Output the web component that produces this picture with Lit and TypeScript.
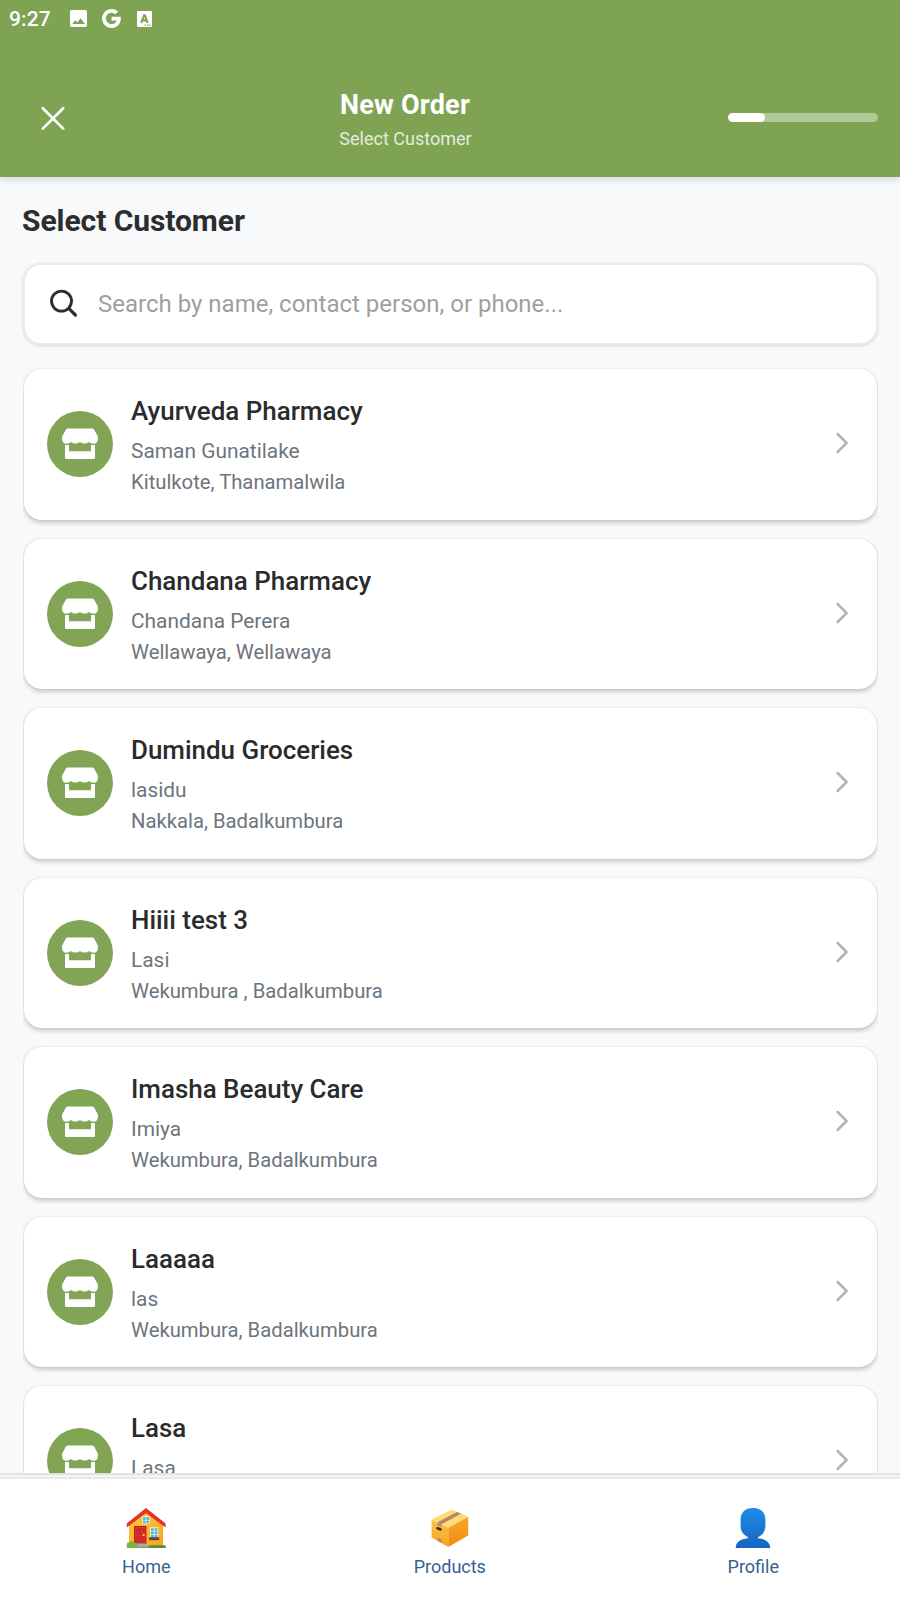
import { LitElement, html, css, svg } from "lit";
import { customElement, property } from "lit/decorators.js";

interface Customer {
  name: string;
  contact: string;
  address: string;
}

const CUSTOMERS: Customer[] = [
  { name: "Ayurveda Pharmacy", contact: "Saman Gunatilake", address: "Kitulkote, Thanamalwila" },
  { name: "Chandana Pharmacy", contact: "Chandana Perera", address: "Wellawaya, Wellawaya" },
  { name: "Dumindu Groceries", contact: "lasidu", address: "Nakkala, Badalkumbura" },
  { name: "Hiiii test 3", contact: "Lasi", address: "Wekumbura , Badalkumbura" },
  { name: "Imasha Beauty Care", contact: "Imiya", address: "Wekumbura, Badalkumbura" },
  { name: "Laaaaa", contact: "las", address: "Wekumbura, Badalkumbura" },
  { name: "Lasa", contact: "Lasa", address: "Wekumbura, Badalkumbura" },
];

@customElement("status-bar")
class StatusBar extends LitElement {
  static styles = css`
    :host { display: flex; align-items: center; height: 37px; padding-left: 9px; color: #fff; }
    .time { font-size: 21px; font-weight: 500; line-height: 25px; width: 61px; padding-top: 1.5px; letter-spacing: 0.15px; }
    svg { display: block; fill: #fff; }
    .photo { margin-right: 14.5px; }
    .google { margin-right: 16px; }
    .hole { fill: #7ea453; }
    .letter { fill: none; stroke: #7ea453; stroke-width: 2.1; }
  `;
  render() {
    return html`
      <span class="time">9:27</span>
      <svg class="photo" width="17" height="17" viewBox="0 0 17 17">
        <rect width="17" height="17" rx="1.8" />
        <path class="hole" d="M2.3 14 L5.2 10.2 L7.3 12.5 L10.7 8.2 L15 14 Z" />
      </svg>
      <svg class="google" width="19" height="19" viewBox="0 0 19 19">
        <path d="M9.6 7.8 H18.7 C19.6 14 15.8 19 9.7 19 A9.5 9.5 0 1 1 16.1 2.6 L13.4 5.3 A5.7 5.7 0 1 0 14.9 11.4 H9.6 Z" />
      </svg>
      <svg width="15" height="16" viewBox="0 0 15 16">
        <rect width="15" height="16" rx="1.2" />
        <path class="letter" d="M4.2 12 L7.1 4.2 H7.9 L10.6 12 M5.3 9.4 H9.6" />
        <path class="hole" d="M7.6 13.4h1.4v1.3h-1.4z M10 13.4h1.4v1.3h-1.4z M12.3 13.4h1.4v1.3h-1.4z" />
      </svg>
    `;
  }
}

@customElement("order-header")
class OrderHeader extends LitElement {
  @property({ type: Number }) progress = 24.6;
  static styles = css`
    :host { display: flex; align-items: center; justify-content: space-between; box-sizing: border-box;
      height: 140px; padding: 22px 22px 0 23px; color: #fff; }
    .close { width: 60px; height: 60px; display: grid; place-items: center; }
    .close svg { display: block; fill: none; stroke: #fff; stroke-width: 2.7; stroke-linecap: round; }
    .titles { text-align: center; padding-top: 3px; }
    .title { font-size: 27px; line-height: 32px; font-weight: 700; letter-spacing: 0.22px; padding-right: 1px; }
    .step { margin-top: 7px; font-size: 18px; line-height: 22px; opacity: 0.8; }
    .track { width: 150px; height: 9px; margin-bottom: 1px; border-radius: 4.5px; background: rgba(255, 255, 255, 0.4); overflow: hidden; }
    .bar { height: 9px; border-radius: 4.5px; background: #fff; }
  `;
  render() {
    return html`
      <div class="close">
        <svg width="26" height="26" viewBox="0 0 26 26"><path d="M2.8 3.2 L23.2 23.6 M23.2 3.2 L2.8 23.6" /></svg>
      </div>
      <div class="titles">
        <div class="title">New Order</div>
        <div class="step">Select Customer</div>
      </div>
      <div class="track"><div class="bar" style="width:${this.progress}%"></div></div>
    `;
  }
}

@customElement("search-field")
class SearchField extends LitElement {
  static styles = css`
    :host { display: flex; align-items: center; box-sizing: border-box; height: 82px; margin: 0 22px 0 23px;
      padding-left: 24.5px; background: #fff; border: 2px solid #e9ebed; border-radius: 18px;
      box-shadow: 0 1px 3px rgba(0, 0, 0, 0.13); }
    svg { display: block; fill: none; stroke: #2b2d2e; stroke-width: 2.9; stroke-linecap: round; margin-right: 18.5px; }
    span { font-size: 24px; line-height: 30px; color: #9f9f9f; }
  `;
  render() {
    return html`
      <svg width="30" height="30" viewBox="0 0 30 30">
        <circle cx="11.5" cy="12.1" r="10" /><path stroke-width="3.2" d="M19 19.6 L25.4 26" />
      </svg>
      <span>Search by name, contact person, or phone...</span>
    `;
  }
}

@customElement("customer-card")
class CustomerCard extends LitElement {
  @property({ attribute: false }) customer!: Customer;
  static styles = css`
    :host { display: flex; align-items: center; box-sizing: border-box; flex: none; height: 150.5px;
      padding: 0 27px 0.5px 23px; background: #fff; border-radius: 18px;
      box-shadow: 0 0 1.5px rgba(0, 0, 0, 0.12), 0 2.5px 4px rgba(0, 0, 0, 0.19); }
    .badge { display: block; flex: none; margin-right: 18px; }
    .disc { fill: #81a555; }
    .shop { fill: #fff; }
    .text { flex: 1; padding-top: 3.5px; }
    .name { font-size: 25.95px; line-height: 30px; font-weight: 500; color: #2a2b2c; }
    .contact { margin-top: 12px; font-size: 20.9px; line-height: 27px; color: #6c757d; }
    .address { margin-top: 4px; font-size: 20.25px; line-height: 26px; color: #6c757d; }
    .chevron { display: block; margin-bottom: 1.5px; fill: none; stroke: #adb5bd; stroke-width: 2.5; stroke-linecap: round; stroke-linejoin: round; }
  `;
  render() {
    const c = this.customer;
    return html`
      <svg class="badge" width="66" height="66" viewBox="0 0 66 66">
        <circle class="disc" cx="33" cy="33" r="33" />
        <path class="shop" d="M21 17.4 H45 Q46.4 17.4 47.1 18.6 L50.6 25 Q51 25.8 51 27
          Q51 32.8 46.6 32.8 Q43.6 32.8 42 31 Q40.3 32.6 37.5 32.6 Q34.7 32.6 33 31
          Q31.3 32.6 28.5 32.6 Q25.7 32.6 24 31 Q22.4 32.8 19.4 32.8 Q15 32.8 15 27
          Q15 25.8 15.4 25 L18.9 18.6 Q19.6 17.4 21 17.4 Z" />
        <path class="shop" d="M18 34.1 H22 V40.3 H44 V34.1 H48 V46.9 Q48 48 46.9 48 H19.1 Q18 48 18 46.9 Z" />
      </svg>
      <div class="text">
        <div class="name">${c.name}</div>
        <div class="contact">${c.contact}</div>
        <div class="address">${c.address}</div>
      </div>
      <svg class="chevron" width="16" height="22" viewBox="0 0 16 22"><path d="M3.6 2 L12.6 11 L3.6 20" /></svg>
    `;
  }
}

const HOUSE = svg`
  <defs><linearGradient id="wall" x1="0" y1="0" x2="1" y2="1">
    <stop offset="0" stop-color="#fcc93a" /><stop offset="1" stop-color="#f9a61e" /></linearGradient></defs>
  <path fill="url(#wall)" d="M20 3 L37 17 V38 H3 V17 Z" />
  <path fill="#e4302b" d="M20 0 L39.6 15.6 V19.6 L20 5 L.8 19.6 V15.6 Z" />
  <rect x="16.2" y="8.2" width="7.6" height="8" fill="#fff3c8" />
  <path fill="#55b7e6" d="M17 9h2.7v2.9H17z M20.4 9h2.7v2.9h-2.7z M17 12.6h2.7v2.9H17z M20.4 12.6h2.7v2.9h-2.7z" />
  <rect x="8" y="18" width="12.4" height="18" fill="#b71c1c" />
  <rect x="9" y="19" width="10.4" height="17" fill="#df2f2f" />
  <path fill="none" stroke="#bd2020" stroke-width=".7" d="M10.8 21h2.8v5.4h-2.8z M15 21h2.8v5.4H15z M10.8 28.4h2.8v5.4h-2.8z M15 28.4h2.8v5.4H15z" />
  <circle cx="17.6" cy="27" r="1.2" fill="#fbc02d" />
  <rect x="24" y="19.3" width="8.4" height="10.6" fill="#fff3c8" />
  <path fill="#45b3e8" d="M25 20.2h2.8v2.6H25z M28.7 20.2h2.8v2.6h-2.8z M25 23.6h2.8v2.6H25z M28.7 23.6h2.8v2.6h-2.8z M25 27h2.8v2.6H25z M28.7 27h2.8v2.6h-2.8z" />
  <rect x="23.2" y="29.2" width="10" height="3" fill="#6b4034" />
  <rect x="4" y="37.2" width="35.6" height="2.8" fill="#5d8f2c" />
  <path fill="#a8a8a8" d="M8 38 V35.4 H20.5 V37 H22.6 V39.4 H8 Z" />
  <path fill="#7cb342" d="M.8 40 V36.4 Q1 34 3.4 34.4 Q5 32 7.4 33.4 Q9.8 34 9.8 35.8 Q12.6 36 12.4 40 Z" />`;

const BOX = svg`
  <defs>
    <linearGradient id="lf" x1="0" y1="0" x2="0" y2="1"><stop offset="0" stop-color="#fbc345" /><stop offset="1" stop-color="#f7a325" /></linearGradient>
    <linearGradient id="rt" x1="0" y1="0" x2="0" y2="1"><stop offset="0" stop-color="#fba729" /><stop offset="1" stop-color="#ee8e0f" /></linearGradient>
  </defs>
  <path fill="url(#lf)" d="M1.6 11.4 L18.3 19.6 V39 L1.6 29.6 Z" />
  <path fill="url(#rt)" d="M18.3 19.6 L38.2 8.4 V27.6 L18.3 39 Z" />
  <path fill="#fddc79" d="M1.6 11.4 L21.6 1.6 L38.2 8.4 L18.3 19.6 Z" />
  <path fill="#bd8368" d="M7.6 14.3 L26.9 4 L31.1 5.7 L11.5 16.2 Z" />
  <path fill="#b9895b" d="M7.6 14.3 L11.5 16.2 V18.9 L7.6 17.4 Z M7.6 29.6 L11.5 31.4 V35 L7.6 33 Z" />
  <path stroke="#3d2a25" stroke-width="2.6" stroke-linecap="round" d="M7.5 20.3 L10.6 21.4" />`;

const PERSON = svg`
  <defs><linearGradient id="bust" x1="0" y1="0" x2="0" y2="40" gradientUnits="userSpaceOnUse">
    <stop offset=".1" stop-color="#1e88e5" /><stop offset="1" stop-color="#1565c0" /></linearGradient></defs>
  <path fill="url(#bust)" d="M20 0 C28 0 32.4 4.6 32.4 12 V17.5 C32.4 23.8 29 27.2 25.2 29 Q24.6 30 25.6 30.3
    C32.4 31 37.2 34.2 37.3 40 H2.7 C2.8 34.2 7.6 31 14.4 30.3 Q15.4 30 14.8 29 C11 27.2 7.6 23.8 7.6 17.5 V12 C7.6 4.6 12 0 20 0 Z" />`;

@customElement("tab-bar")
class TabBar extends LitElement {
  static styles = css`
    :host { display: grid; grid-template-columns: repeat(3, 303.5px); justify-content: center; flex: none;
      box-sizing: border-box; height: 127px; padding: 29px 0.4px 0 0; background: #fff;
      border-top: 6px solid; border-image: linear-gradient(#e0e3e6 0 2px, #f3f5f7 2px 4px, #e6eaed 4px 6px) 6 0 0 0; }
    .tab { display: flex; flex-direction: column; align-items: center; }
    .tab svg { display: block; }
    .label { margin-top: 8px; font-size: 18px; line-height: 22px; color: #356291; }
  `;
  render() {
    return html`${[["Home", HOUSE] as const, ["Products", BOX] as const, ["Profile", PERSON] as const].map(
      ([label, art]) => html`<div class="tab">
        <svg width="40" height="40" viewBox="0 0 40 40">${art}</svg>
        <span class="label">${label}</span>
      </div>`
    )}`;
  }
}

@customElement("app-root")
class AppRoot extends LitElement {
  static styles = css`
    :host { display: flex; flex-direction: column; height: 1600px; overflow: hidden; background: #f8f9fb;
      font-family: Roboto, sans-serif; }
    .top { flex: none; background: #7ea453; box-shadow: 0 2px 8px rgba(0, 0, 0, 0.16); }
    .heading { margin: 26px 22px 24px; font-size: 30px; line-height: 36px; font-weight: 700; letter-spacing: -0.06px; color: #2c2d2e; }
    search-field { flex: none; }
    .list { flex: 1; min-height: 0; overflow: hidden; display: flex; flex-direction: column; gap: 19px;
      margin: 22px 22px 0 23px; padding: 2px 1px 0; }
  `;
  render() {
    return html`
      <div class="top">
        <status-bar></status-bar>
        <order-header></order-header>
      </div>
      <div class="heading">Select Customer</div>
      <search-field></search-field>
      <div class="list">${CUSTOMERS.map((c) => html`<customer-card .customer=${c}></customer-card>`)}</div>
      <tab-bar></tab-bar>
    `;
  }
}
